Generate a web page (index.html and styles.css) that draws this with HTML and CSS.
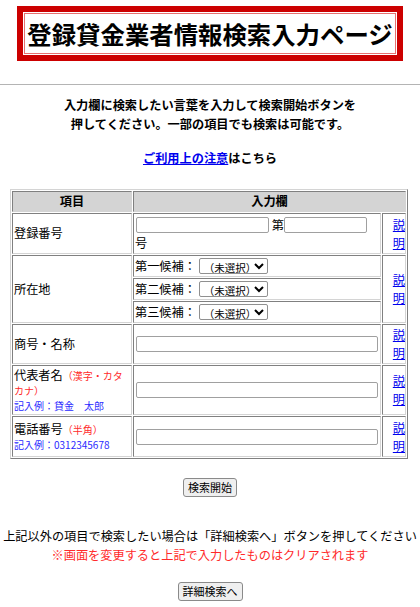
FILE: index.html
```html
<!DOCTYPE html>
<html lang="ja">
<head>
<meta charset="utf-8">
<title>登録貸金業者情報検索入力ページ</title>
<link rel="stylesheet" href="styles.css">
</head>
<body>
<div class="title"><h1>登録貸金業者情報検索入力ページ</h1></div>
<hr class="rule">
<p class="intro">入力欄に検索したい言葉を入力して検索開始ボタンを<br>押してください。一部の項目でも検索は可能です。</p>
<p class="notice"><a href="#">ご利用上の注意</a>はこちら</p>
<table class="form">
  <colgroup><col class="c1"><col class="c2"><col class="c3"></colgroup>
  <tr class="r-head"><th>項目</th><th colspan="2">入力欄</th></tr>
  <tr class="r-num">
    <td class="label">登録番号</td>
    <td class="field"><input class="in-a" type="text"> 第<input class="in-b" type="text"><br>号</td>
    <td class="help"><a href="#">説明</a></td>
  </tr>
  <tr class="r-sub">
    <td class="label" rowspan="3">所在地</td>
    <td class="field">第一候補： <select><option>（未選択）</option></select></td>
    <td class="help" rowspan="3"><a href="#">説明</a></td>
  </tr>
  <tr class="r-sub"><td class="field">第二候補： <select><option>（未選択）</option></select></td></tr>
  <tr class="r-sub"><td class="field">第三候補： <select><option>（未選択）</option></select></td></tr>
  <tr class="r-name">
    <td class="label">商号・名称</td>
    <td class="field"><input class="in-w" type="text"></td>
    <td class="help"><a href="#">説明</a></td>
  </tr>
  <tr class="r-rep">
    <td class="label">代表者名<span class="red">（漢字・カタ<br>カナ）</span><br><span class="blue">記入例：貸金　太郎</span></td>
    <td class="field"><input class="in-w" type="text"></td>
    <td class="help"><a href="#">説明</a></td>
  </tr>
  <tr class="r-tel">
    <td class="label">電話番号<span class="red">（半角）</span><br><span class="blue">記入例：0312345678</span></td>
    <td class="field"><input class="in-w" type="text"></td>
    <td class="help"><a href="#">説明</a></td>
  </tr>
</table>
<div class="actions"><button type="button">検索開始</button></div>
<p class="note">上記以外の項目で検索したい場合は「詳細検索へ」ボタンを押してください<br><span class="warn">※画面を変更すると上記で入力したものはクリアされます</span></p>
<div class="actions actions-last"><button type="button">詳細検索へ</button></div>
</body>
</html>
```

FILE: styles.css
```css
body {
  margin: 0;
  font-family: "Noto Sans CJK JP", "Noto Sans", sans-serif;
  font-size: 12.2px;
  color: #000;
  background: #fff;
}

.title {
  width: fit-content;
  margin: 6px auto 0;
  border: 6px solid #cc0000;
  padding: 1px;
  background: #fff;
}

.title h1 {
  margin: 0;
  border: 1px solid #e87070;
  padding: 4px 2px;
  font-size: 24.4px;
  line-height: 31px;
  font-weight: bold;
  white-space: nowrap;
}

.rule {
  margin: 23px 0 0;
  border: 0;
  border-top: 1px solid #b4b4b4;
  height: 0;
}

.intro {
  margin: 11px 0 0;
  text-align: center;
  font-weight: bold;
  line-height: 19px;
}

.notice {
  margin: 15px 0 0;
  text-align: center;
  font-weight: bold;
  line-height: 19px;
}

.notice a {
  color: #0000ee;
}

.form {
  margin: 21px auto 0 10px;
  width: 398px;
  table-layout: fixed;
  border: 1px solid;
  border-color: #d4d4d4 #808080 #808080 #d4d4d4;
  border-spacing: 1px;
}

.c1 { width: 120px; }
.c3 { width: 24px; }

.r-head { height: 21px; }
.r-num { height: 41px; }
.r-sub { height: 22px; }
.r-name { height: 40px; }
.r-rep { height: 50px; }
.r-tel { height: 41px; }

.form th,
.form td {
  box-sizing: border-box;
  border: 1px solid;
  border-color: #808080 #d4d4d4 #d4d4d4 #808080;
  padding: 1px;
  line-height: 18px;
  font-size: 12.2px;
}

.form th {
  background: #d4d4d4;
  font-weight: bold;
  text-align: center;
  line-height: 17px;
}

.form td.label {
  line-height: 15px;
  padding: 1px;
}

.form td.field {
  padding: 1px;
  white-space: nowrap;
}

.form td.help {
  text-align: right;
  padding: 1px 0 1px 1px;
}

.help a {
  color: #0000ee;
}

.red {
  color: #ff2a2a;
  font-size: 10px;
}

.blue {
  color: #2a2aff;
  font-size: 10px;
}

input {
  box-sizing: border-box;
  height: 16px;
  margin: 1px 0 1px 1px;
  padding: 0 2px;
  border: 1px solid #a0a0a0;
  border-radius: 2px;
  vertical-align: top;
  font: 11px "Noto Sans CJK JP", sans-serif;
  background: #fff;
}

.in-a { width: 133px; }
.in-b { width: 83px; margin-left: 0; }
.in-w { width: 242px; }

select {
  box-sizing: border-box;
  width: 69px;
  height: 16px;
  margin: 1px 0;
  padding: 0;
  border: 1px solid #909090;
  border-radius: 2px;
  font: 10.5px "Noto Sans CJK JP", sans-serif;
  vertical-align: top;
  background: #fff;
  color: #000;
}

.actions {
  text-align: center;
  margin-top: 19px;
}

button {
  height: 19px;
  padding: 0 4px;
  border: 1px solid #8a8a8a;
  border-radius: 3px;
  background: #efefef;
  font: 11px "Noto Sans CJK JP", sans-serif;
  line-height: 15px;
  color: #000;
  vertical-align: top;
}

.note {
  margin: 30px 0 0;
  text-align: center;
  line-height: 19px;
}

.warn {
  color: #ff2a2a;
}

.actions-last {
  margin-top: 17px;
}
```
